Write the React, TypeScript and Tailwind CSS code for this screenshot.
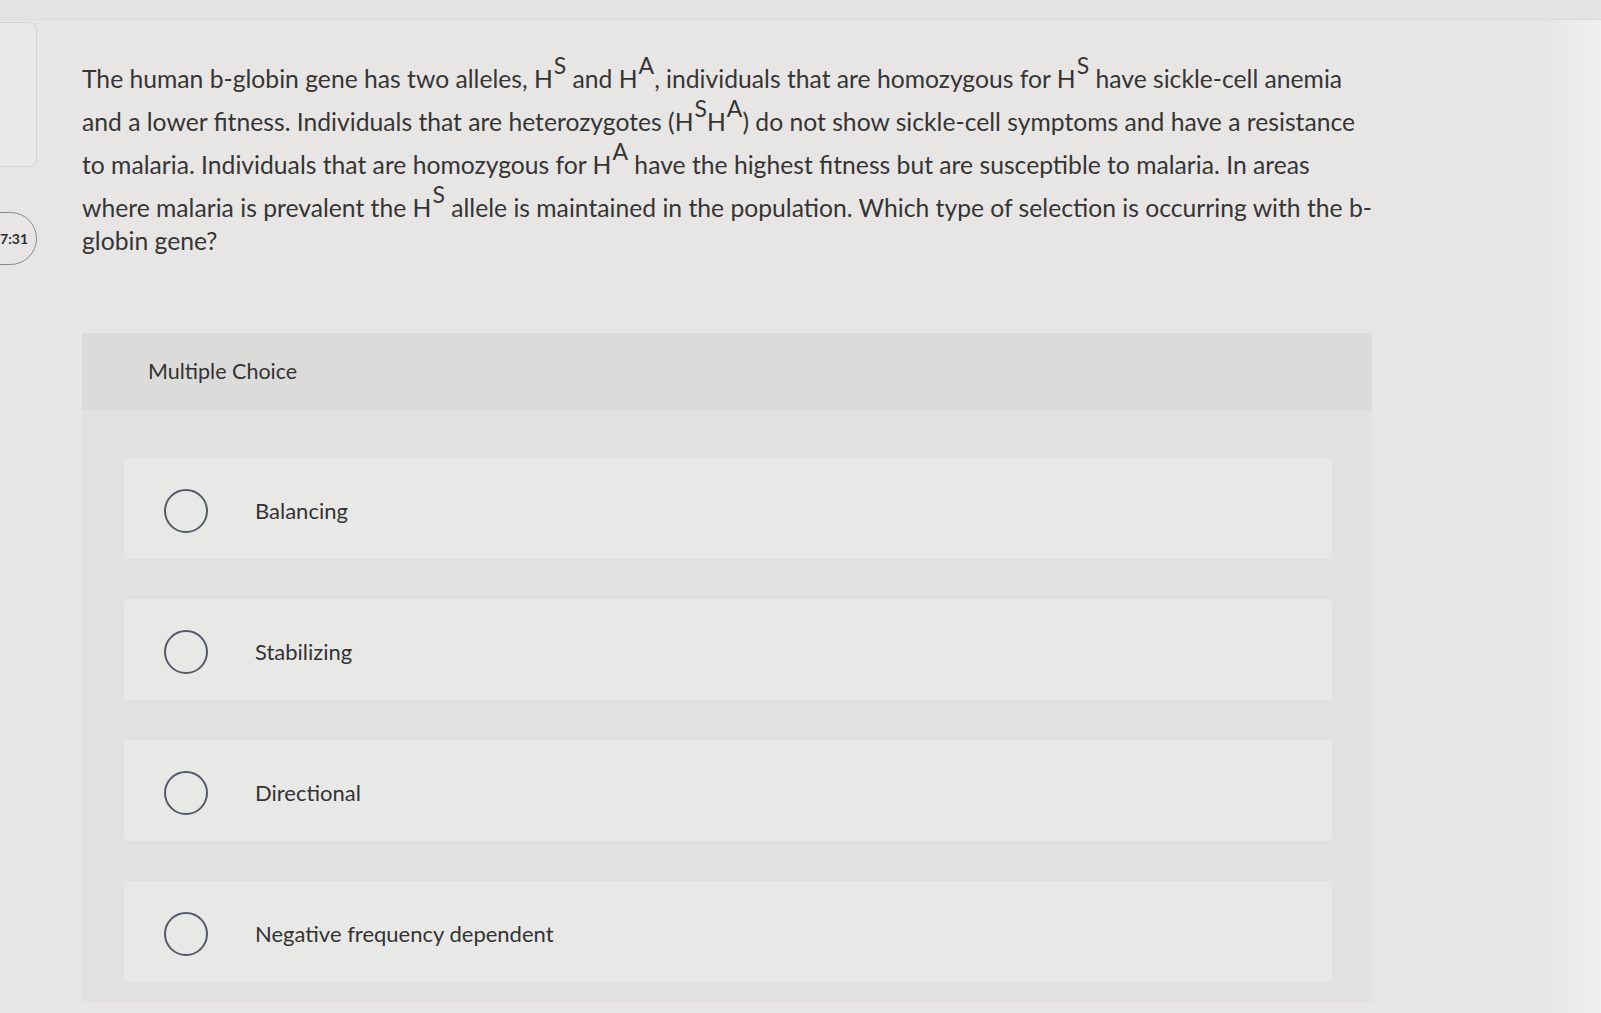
import React from 'react';

const options = ['Balancing', 'Stabilizing', 'Directional', 'Negative frequency dependent'];

const Sup: React.FC<{ children: React.ReactNode }> = ({ children }) => (
    <sup className="text-[23px] top-[-0.6em] ml-[1px]">{children}</sup>
);

const App: React.FC = () => {
    return (
        <div className="w-[1601px] h-[1013px] overflow-hidden bg-[#e7e6e4] text-[#353535] font-['Lato','Liberation_Sans',sans-serif] flex flex-col">
            <div className="h-[20px] shrink-0 border-b border-[#dcdbd9] bg-[#e4e3e1]" />
            <div className="flex flex-1">
                {/* left rail */}
                <div className="w-[37px] shrink-0 flex flex-col pt-[2px] gap-[45px]">
                    <div className="-ml-[30px] w-[67px] h-[145px] rounded-[8px] border border-[#d6d5d3] bg-[#e9e8e6]" />
                    <div className="-ml-[30px] w-[67px] h-[53px] rounded-full border-[1.5px] border-[#8a8a8a] flex items-center justify-end pr-[8px] text-[14px] font-bold text-[#2e2e2e]">
                        7:31
                    </div>
                </div>

                <div className="flex-1 pl-[45px] pt-[32px]">
                    <div className="text-[24.7px] whitespace-nowrap">
                        <div className="leading-[33px] pt-[10px]">
                            The human b-globin gene has two alleles, H<Sup>S</Sup> and H<Sup>A</Sup>, individuals that are homozygous for H<Sup>S</Sup> have sickle-cell anemia
                        </div>
                        <div className="leading-[33px] pt-[10px]">
                            and a lower fitness. Individuals that are heterozygotes (H<Sup>S</Sup>H<Sup>A</Sup>) do not show sickle-cell symptoms and have a resistance
                        </div>
                        <div className="leading-[33px] pt-[10px]">
                            to malaria. Individuals that are homozygous for H<Sup>A</Sup> have the highest fitness but are susceptible to malaria. In areas
                        </div>
                        <div className="leading-[33px] pt-[10px]">
                            where malaria is prevalent the H<Sup>S</Sup> allele is maintained in the population. Which type of selection is occurring with the b-
                        </div>
                        <div className="leading-[33px]">globin gene?</div>
                    </div>

                    <div className="mt-[76px] w-[1290px] bg-[#e1e1e0] pb-[20px]">
                        <div className="h-[77px] bg-[#dbdbda] flex items-center pl-[66px] text-[21.5px] text-[#333]">
                            Multiple Choice
                        </div>
                        <div className="flex flex-col gap-[40px] pt-[48px] px-[42px] pr-[40px]">
                            {options.map((o) => (
                                <div key={o} className="h-[101px] bg-[#e8e8e7] rounded-[2px] flex items-center pl-[40px] pt-[4px]">
                                    <span className="w-[44px] h-[44px] rounded-full border-2 border-[#555a68] shrink-0" />
                                    <span className="ml-[47px] text-[22px] text-[#333]">{o}</span>
                                </div>
                            ))}
                        </div>
                    </div>
                </div>

                <div className="w-[60px] shrink-0 bg-gradient-to-r from-[#e7e6e4] to-[#f1f0ee]" />
            </div>
        </div>
    );
};

export default App;
